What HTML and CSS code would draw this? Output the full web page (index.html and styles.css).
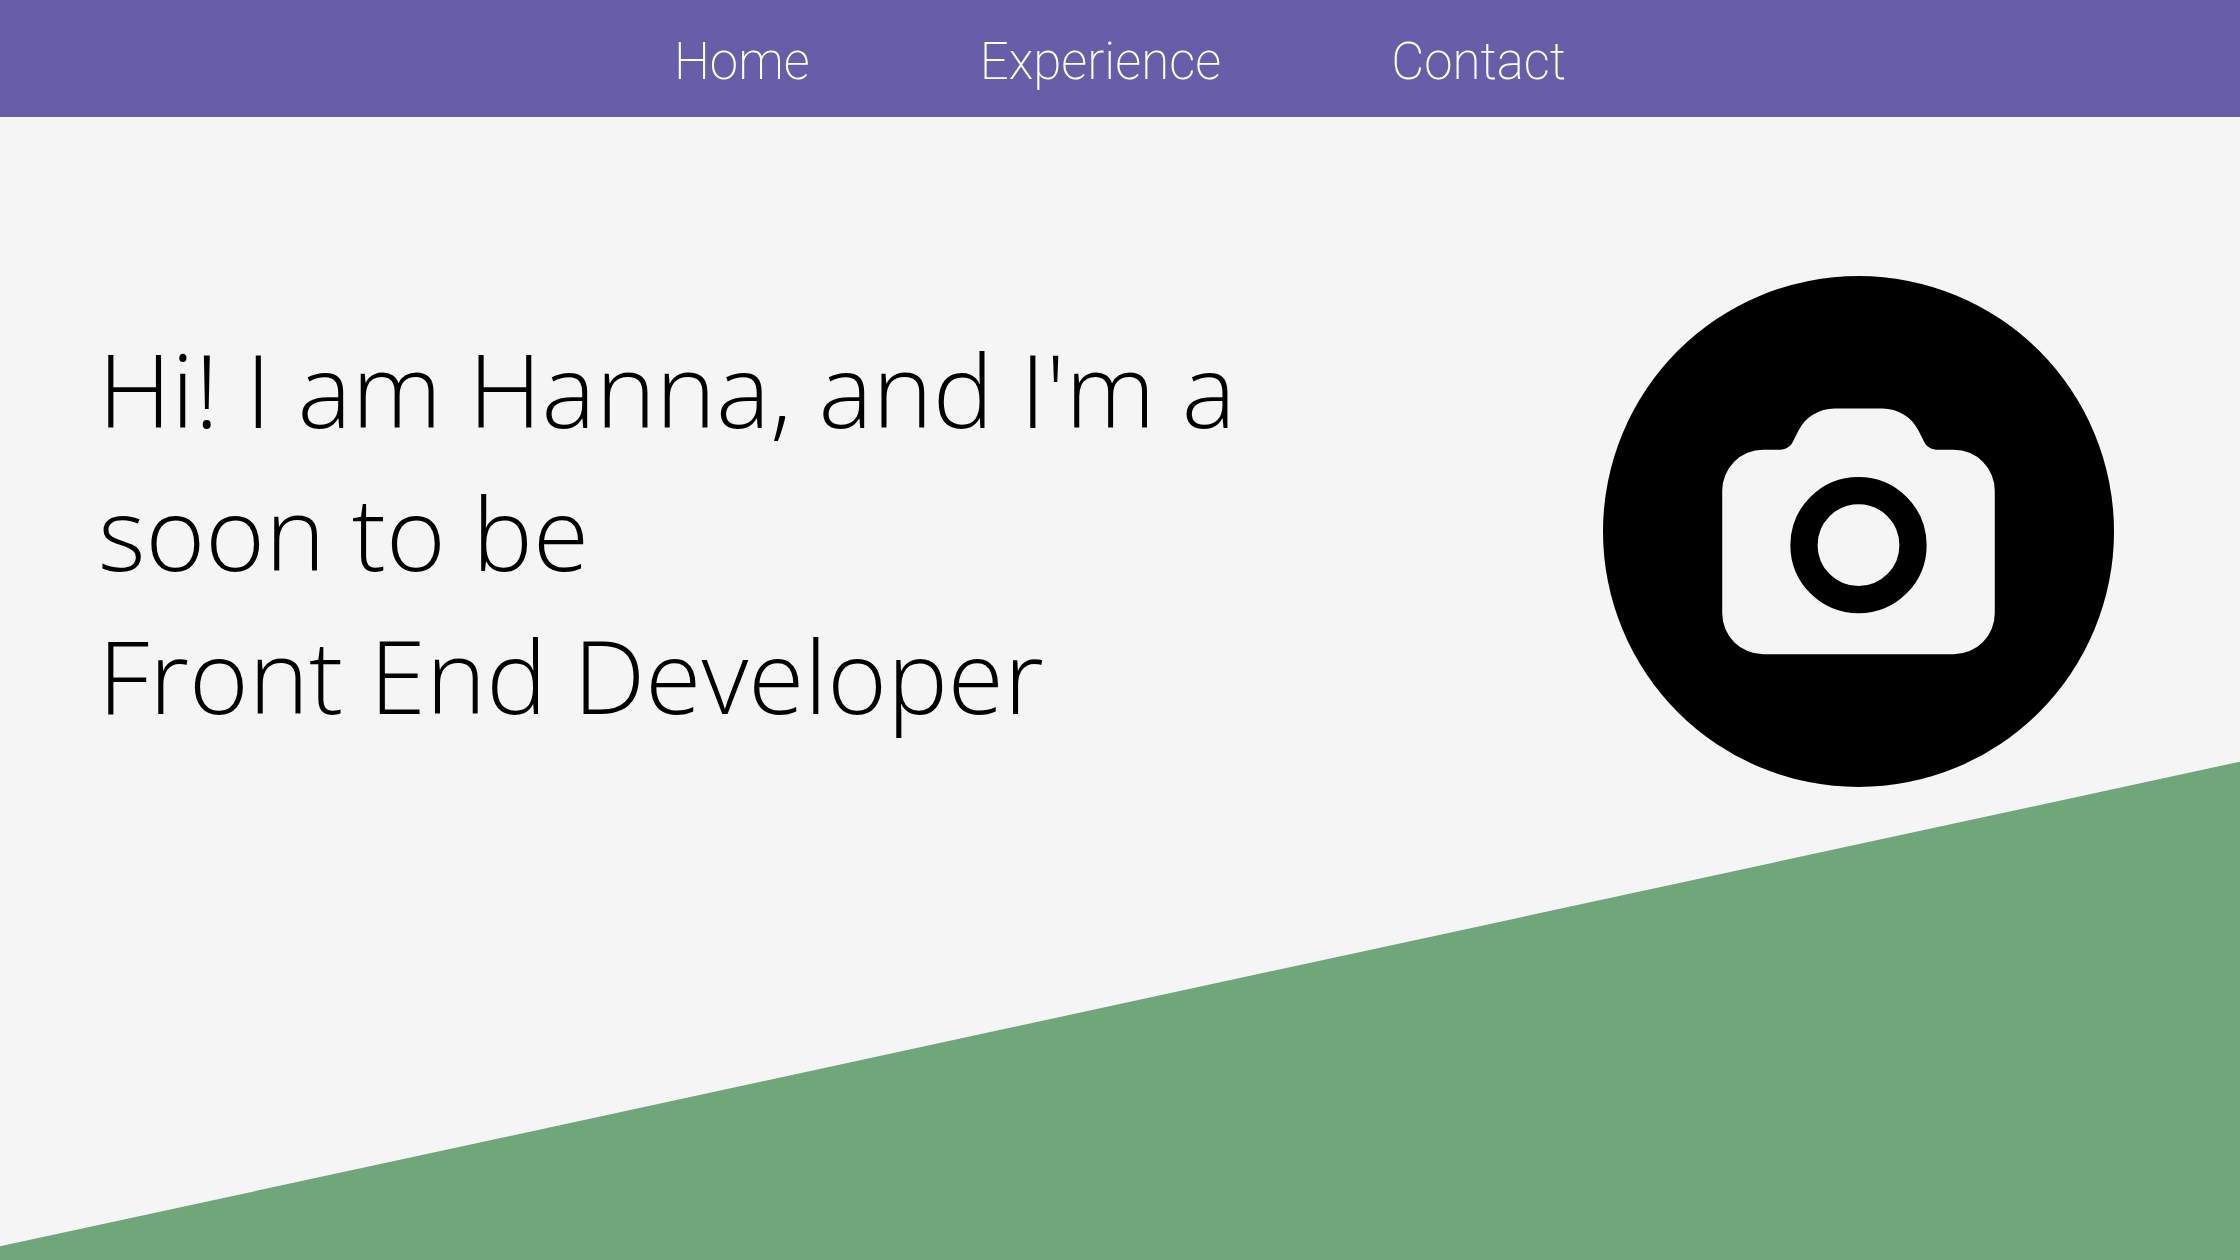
FILE: index.html
```
<!DOCTYPE html>
<html lang="en">
<head>
<meta charset="utf-8">
<meta name="viewport" content="width=device-width, initial-scale=1">
<title>Hanna</title>
<link rel="stylesheet" href="styles.css">
</head>
<body>
<header class="header">
  <nav class="nav">
    <a class="nav-link" href="#home">Home</a>
    <a class="nav-link" href="#experience">Experience</a>
    <a class="nav-link" href="#contact">Contact</a>
  </nav>
</header>
<main class="hero" id="home">
  <div class="hero-content">
    <h1 class="hero-title">Hi! I am Hanna, and I'm a soon to be<br>Front End Developer</h1>
    <svg class="hero-icon" viewBox="0 0 30 30" aria-hidden="true">
      <circle cx="15" cy="15" r="15" fill="#000"/>
      <path fill="#f5f5f5" d="M9.4 10.2H10.42C10.72 10.2 11 10.02 11.14 9.75L11.48 9.07C11.88 8.28 12.69 7.78 13.6 7.78H16.4C17.31 7.78 18.12 8.28 18.52 9.07L18.86 9.75C19 10.02 19.28 10.2 19.58 10.2H20.6A2.4 2.4 0 0 1 23 12.6V19.8A2.4 2.4 0 0 1 20.6 22.2H9.4A2.4 2.4 0 0 1 7 19.8V12.6A2.4 2.4 0 0 1 9.4 10.2Z"/>
      <circle cx="15" cy="15.8" r="3.2" fill="none" stroke="#000" stroke-width="1.6"/>
    </svg>
  </div>
</main>
</body>
</html>
```
FILE: styles.css
```
* {
  box-sizing: border-box;
}

body {
  display: flex;
  flex-direction: column;
  min-height: 100vh;
  margin: 0;
  background: #6fa67a;
  color: #000;
  font-family: "Open Sans", sans-serif;
}

.header {
  padding: 32px 24px 25px;
  background: #675eaa;
}

.nav {
  display: flex;
  justify-content: center;
  gap: 170px;
}

.nav-link {
  color: #fff;
  font-family: Roboto, sans-serif;
  font-size: 51px;
  font-weight: 200;
  line-height: 60px;
  text-decoration: none;
}

.hero {
  flex: 1;
  padding: 159px 126px 159px 98px;
  background: #f5f5f5;
  clip-path: polygon(0 0, 100% 0, 100% 56.4%, 0 98.8%);
}

.hero-content {
  display: flex;
  align-items: center;
  justify-content: space-between;
  gap: 48px;
}

.hero-title {
  max-width: 1200px;
  margin: 0;
  font-size: 102px;
  font-weight: 300;
  line-height: 143px;
}

.hero-icon {
  flex: none;
  width: 511px;
  height: 511px;
}
```
